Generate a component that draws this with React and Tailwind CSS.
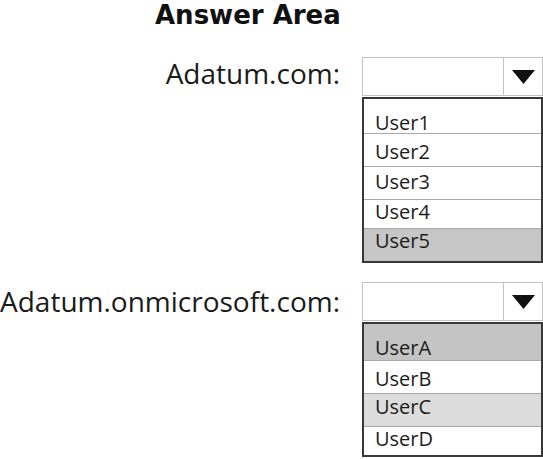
const lists = [
  {
    label: 'Adatum.com:',
    labelOffset: 'mt-[-3px]',
    rows: [
      { text: 'User1', h: 'h-[34px]', pt: 'pt-[12px]', bg: 'bg-white' },
      { text: 'User2', h: 'h-[33px]', pt: 'pt-[6px]', bg: 'bg-white' },
      { text: 'User3', h: 'h-[33px]', pt: 'pt-[3px]', bg: 'bg-white' },
      { text: 'User4', h: 'h-[29px]', pt: 'pt-0', bg: 'bg-white' },
      { text: 'User5', h: 'h-[33px]', pt: 'pt-0', bg: 'bg-[#c6c6c6]' },
    ],
  },
  {
    label: 'Adatum.onmicrosoft.com:',
    labelOffset: 'mt-0',
    rows: [
      { text: 'UserA', h: 'h-[36px]', pt: 'pt-[12px]', bg: 'bg-[#c4c4c4]' },
      { text: 'UserB', h: 'h-[33px]', pt: 'pt-[6px]', bg: 'bg-white' },
      { text: 'UserC', h: 'h-[33px]', pt: 'pt-[1px]', bg: 'bg-[#dcdcdc]' },
      { text: 'UserD', h: 'h-[29px]', pt: 'pt-0', bg: 'bg-white' },
    ],
  },
]

function Select({ rows }) {
  return (
    <div className="w-[181px]">
      <div className="flex h-[39px] border border-[#c2c2c2] bg-white">
        <div className="flex-1 border-r border-[#c2c2c2]" />
        <div className="flex w-[38px] items-center justify-center">
          <svg width="23" height="14" viewBox="0 0 23 14">
            <polygon points="0,0 23,0 11.5,14" fill="#111" />
          </svg>
        </div>
      </div>
      <div className="mt-[1px] border-2 border-[#383838] bg-white">
        {rows.map((r, i) => (
          <div
            key={r.text}
            className={`${r.h} ${r.pt} ${r.bg} ${i > 0 ? 'border-t border-[#a8a8a8]' : ''} pl-[11px] text-[20px] leading-[24px] text-[#1c1c1c]`}
          >
            {r.text}
          </div>
        ))}
      </div>
    </div>
  )
}

export default function App() {
  return (
    <div className="h-[459px] w-[543px] overflow-hidden bg-white font-['Open_Sans',sans-serif]">
      <h1 className="ml-[155px] font-['DejaVu_Sans',sans-serif] text-[26px] font-bold leading-[30px] text-[#111]">
        Answer Area
      </h1>

      <div className="mt-[27px] flex flex-col gap-[19px]">
        {lists.map((l) => (
          <div key={l.label} className="flex items-start">
            <div className={`w-[340px] ${l.labelOffset} text-right text-[28px] leading-[38px] text-[#1a1a1a]`}>
              {l.label}
            </div>
            <div className="ml-[22px]">
              <Select rows={l.rows} />
            </div>
          </div>
        ))}
      </div>
    </div>
  )
}
